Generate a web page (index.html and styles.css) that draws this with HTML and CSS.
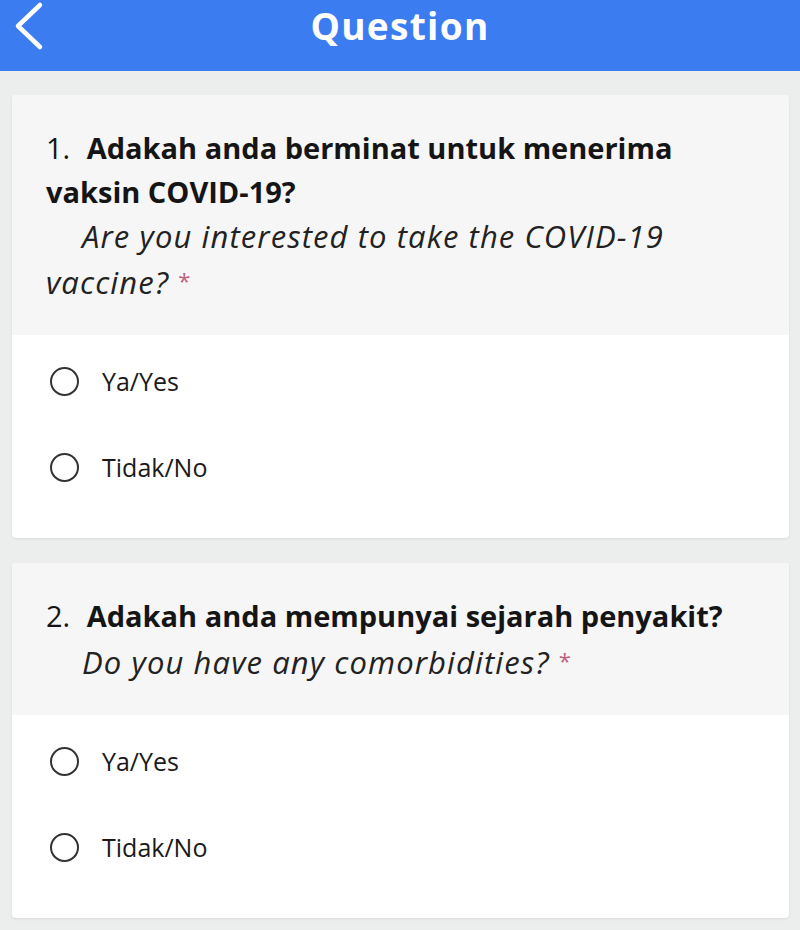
FILE: index.html
```html
<!DOCTYPE html>
<html lang="en">
<head>
	<meta charset="UTF-8">
	<meta name="viewport" content="width=device-width, initial-scale=1.0">
	<title>Question</title>
	<link rel="stylesheet" href="styles.css">
</head>
<body>
	<div class="topbar">
		<button class="back" aria-label="Back">
			<svg width="34" height="50" viewBox="0 0 34 50">
				<path d="M29 4 L7 25 L29 46" fill="none" stroke="#fff" stroke-width="4.5" stroke-linecap="round" stroke-linejoin="round"/>
			</svg>
		</button>
		<div class="title">Question</div>
	</div>

	<div class="questions">
		<div class="card">
			<div class="card-head">
				<div class="q-text"><span class="q-num">1.</span> Adakah anda berminat untuk menerima vaksin COVID-19?</div>
				<div class="q-sub">Are you interested to take the COVID-19 vaccine? <span class="req">*</span></div>
			</div>
			<div class="options">
				<label class="option"><span class="radio"></span>Ya/Yes</label>
				<label class="option"><span class="radio"></span>Tidak/No</label>
			</div>
		</div>

		<div class="card">
			<div class="card-head">
				<div class="q-text"><span class="q-num">2.</span> Adakah anda mempunyai sejarah penyakit?</div>
				<div class="q-sub">Do you have any comorbidities? <span class="req">*</span></div>
			</div>
			<div class="options">
				<label class="option"><span class="radio"></span>Ya/Yes</label>
				<label class="option"><span class="radio"></span>Tidak/No</label>
			</div>
		</div>
	</div>
</body>
</html>
```

FILE: styles.css
```css
body {
	margin: 0;
	background-color: #eceeed;
	font-family: "Open Sans", Lato, sans-serif;
	color: #151515;
}
.topbar {
	position: relative;
	height: 71px;
	background-color: #3b7cf0;
	display: flex;
	justify-content: center;
}
.back {
	position: absolute;
	left: 11px;
	top: 1px;
	padding: 0;
	border: none;
	background: none;
	cursor: pointer;
}
.title {
	font-size: 37px;
	line-height: normal;
	font-weight: 700;
	letter-spacing: 1.3px;
	color: #fff;
}
.questions {
	display: flex;
	flex-direction: column;
	gap: 25px;
	padding: 24px 11px 12px 12px;
}
.card {
	background-color: #fff;
	border-radius: 4px;
	box-shadow: 0 1px 3px rgba(0, 0, 0, 0.08);
	overflow: hidden;
}
.card-head {
	background-color: #f6f6f6;
	padding: 31px 30px 31px 34px;
}
.q-text {
	font-size: 29px;
	line-height: 44px;
	font-weight: 700;
}
.q-num {
	font-weight: 400;
	margin-right: 9px;
}
.q-sub {
	font-size: 31px;
	line-height: 44px;
	font-style: italic;
	letter-spacing: 1.1px;
	color: #222;
	text-indent: 36px;
}
.req {
	color: #c0607a;
	font-size: 22px;
	font-style: normal;
	vertical-align: 5px;
}
.options {
	padding: 3px 34px 28px 38px;
}
.option {
	height: 86px;
	display: flex;
	align-items: center;
	gap: 23px;
	font-size: 25px;
	color: #1a1a1a;
	cursor: pointer;
}
.radio {
	width: 25px;
	height: 25px;
	border: 2.5px solid #333;
	border-radius: 50%;
}
```
